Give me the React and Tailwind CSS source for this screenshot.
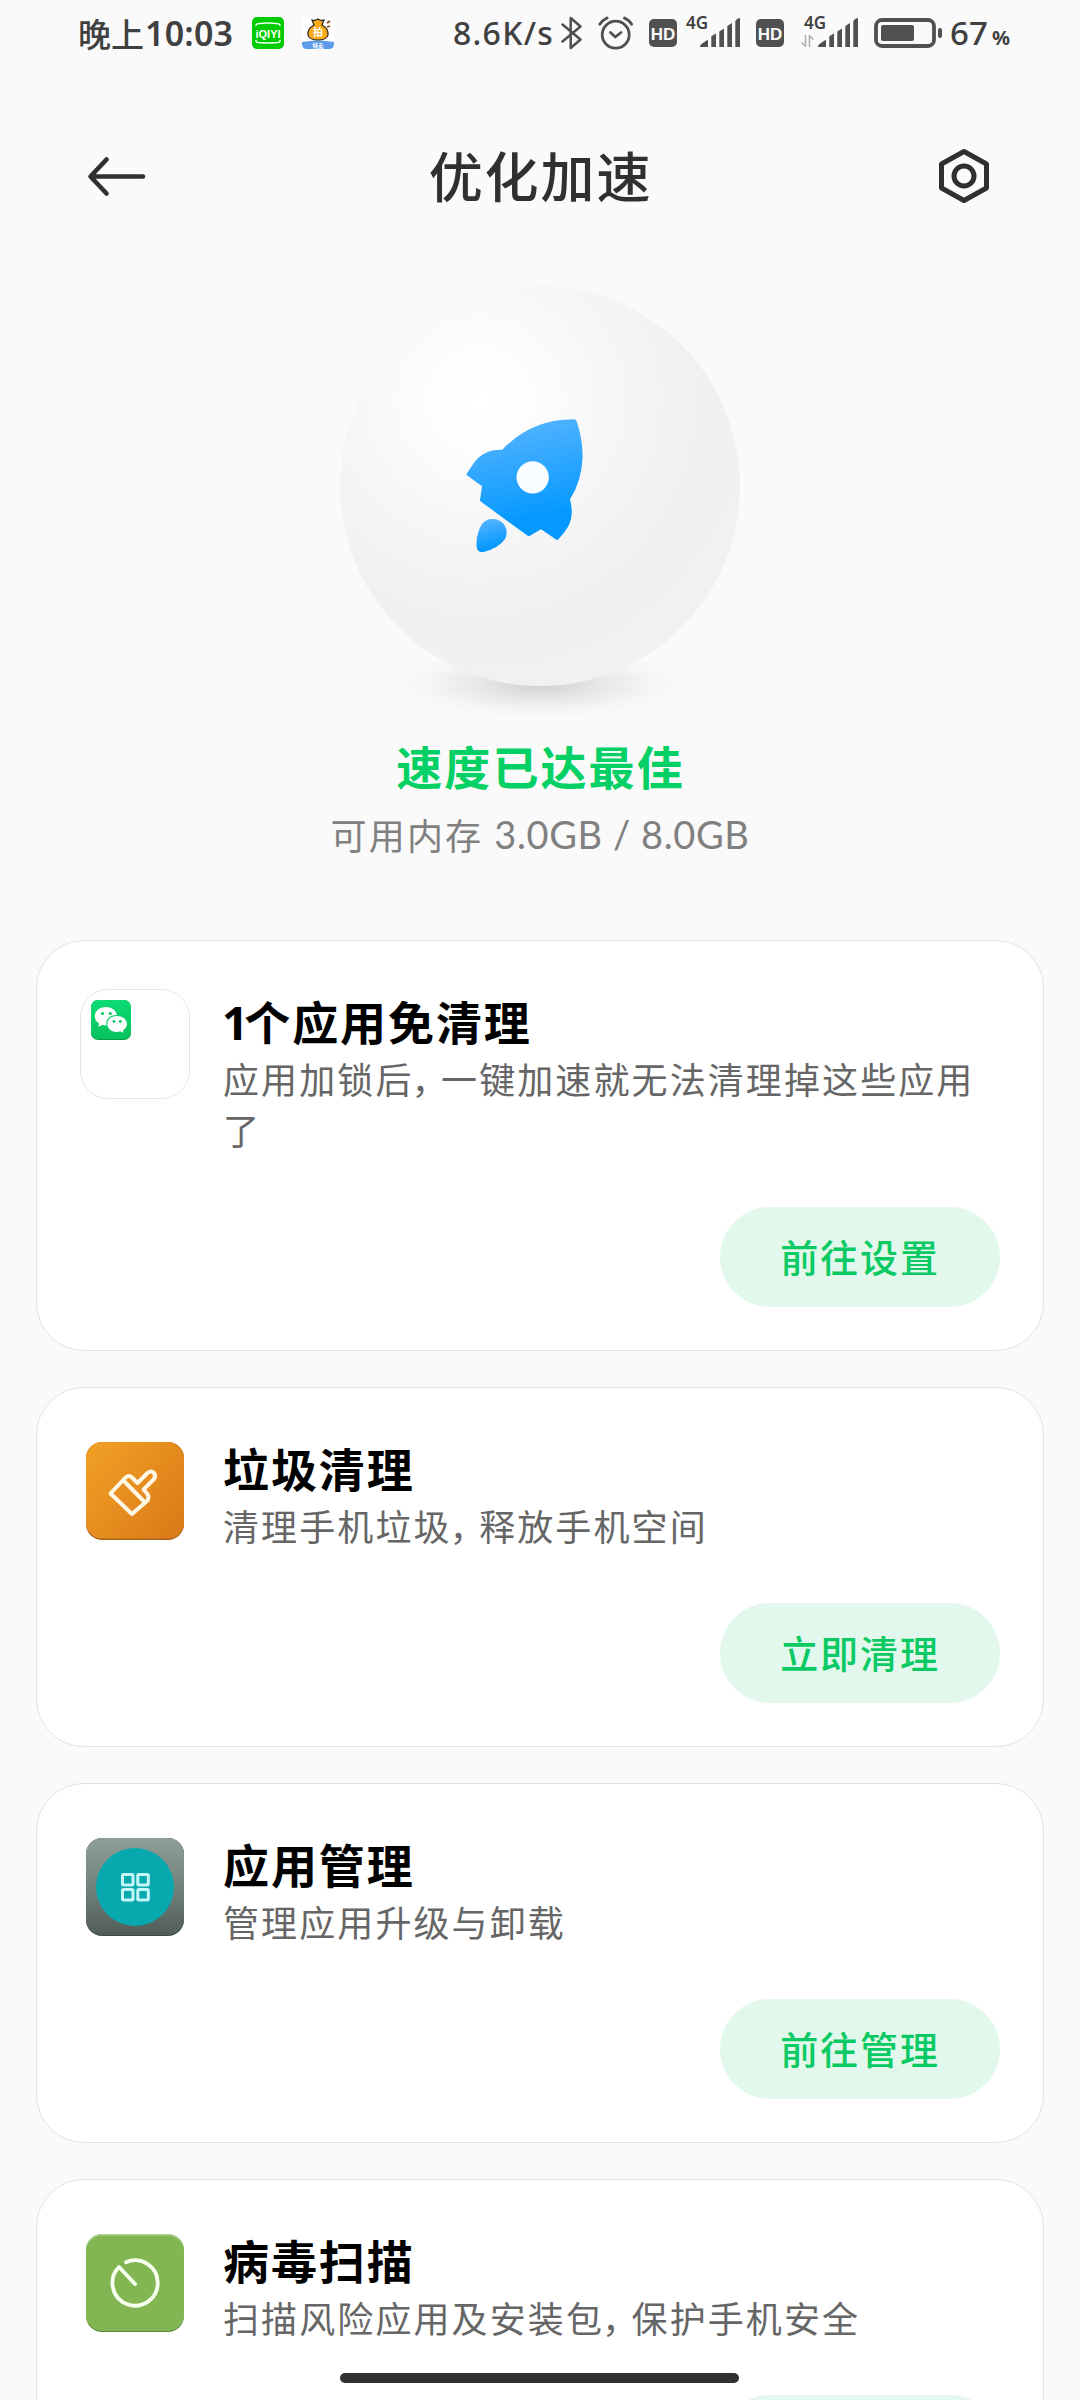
function SignalBars() {
  return (
    <svg width="40" height="29" viewBox="0 0 40 29" fill="#505050">
      <path d="M0 28.5 Q0 27 1.5 26 L7 22.2 Q8 21.8 8 23 V29 H1 Q0 29 0 28.5Z" />
      <path d="M11.3 18.2 L16 15.5 V29 H11.3Z" />
      <path d="M19.3 13.5 L24 10.5 V29 H19.3Z" />
      <path d="M27.3 8 L32 5 V29 H27.3Z" />
      <path d="M35.3 3 Q36 1.5 38 .5 Q40 -.5 40 1 V29 H35.3Z" />
    </svg>
  );
}

function HdBadge({ className }) {
  return (
    <div className={"flex h-7 w-7 items-center justify-center rounded-[5px] bg-[#505050] font-['Liberation_Sans',sans-serif] text-[17px] leading-none font-bold text-[#fafafa] " + className}>
      <span className="pt-[2px]">HD</span>
    </div>
  );
}

function StatusBar() {
  return (
    <div className="flex h-[66px] shrink-0 items-start pl-[78px] text-[#404040]">
      <div className="mt-[13px] flex w-[170px] items-center whitespace-nowrap leading-[40px]">
        <span className="w-[67px] font-['Noto_Sans_CJK_SC',sans-serif] text-[33px] font-medium">晚上</span>
        <span className="font-['Noto_Sans',sans-serif] text-[34px] font-semibold tracking-[0.2px]">10:03</span>
      </div>
      <svg className="mt-[17px] ml-[4px] shrink-0 overflow-visible" width="32" height="32" viewBox="0 0 32 32">
        <rect width="32" height="32" rx="5" fill="#0c0" />
        <path d="M4 9 V8 Q4 7 6 6.700 Q16 5.500 26 6.700 Q28 7 28 8 V9 M4 23 V24 Q4 25.300 6 25.600 Q16 26.600 26 25.600 Q28 25.300 28 24 V23" fill="none" stroke="#eaffea" strokeWidth="1.500" />
        <text x="16" y="20.500" textAnchor="middle" fontFamily="Liberation Sans Narrow, Liberation Sans" fontWeight="700" fontSize="11" fill="#fff">iQIYI</text>
      </svg>
      <svg className="mt-[17px] ml-[18px] shrink-0" width="32" height="32" viewBox="0 0 32 32">
        <rect width="32" height="32" rx="5" fill="#fff" />
        <path d="M0 25 Q16 22 32 25 V27 Q32 32 27 32 H5 Q0 32 0 27Z" fill="#5b9bea" />
        <path d="M10 3 Q13 4 16 2 Q19 4 22 3 L20 8 Q27 12 26 18 Q25 23 16 23 Q7 23 6 18 Q5 12 12 8Z" fill="#f9a91a" stroke="#222" strokeWidth="1.200" />
        <path d="M25 6 L28 4 M25 10 L28 9" stroke="#7a4a10" strokeWidth="1.800" />
        <text x="16" y="19" textAnchor="middle" fontFamily="Noto Sans CJK SC" fontWeight="700" fontSize="10" fill="#fff">拍</text>
        <text x="16" y="30.500" textAnchor="middle" fontFamily="Noto Sans CJK SC" fontWeight="700" fontSize="5.500" fill="#fff">特卖</text>
      </svg>
      <span className="mt-[13px] ml-[119px] w-[102px] whitespace-nowrap font-['Noto_Sans','Noto_Sans_CJK_SC',sans-serif] text-[32px] leading-[40px] font-medium tracking-[1.3px]">8.6K/s</span>
      <svg className="mt-[16px] ml-[6px] shrink-0" width="22" height="34" viewBox="0 0 22 34" fill="none" stroke="#505050" strokeWidth="2.500" strokeLinejoin="round" strokeLinecap="round">
        <path d="M1.500 8.500 L19.500 23.500 L9.700 32 V2 L19.500 10.500 L1.500 25.500" />
      </svg>
      <svg className="mt-[15px] ml-[15px] shrink-0" width="36" height="36" viewBox="0 0 36 36" fill="none" stroke="#505050" strokeWidth="2.800" strokeLinecap="round">
        <circle cx="17.700" cy="19.700" r="13.500" />
        <path d="M12.500 17.500 L17.300 22 L23 17.500 M1.800 9.200 Q4 5.500 9 3 M33.600 9.200 Q31.500 5.500 26.500 3" />
      </svg>
      <HdBadge className="mt-[19px] ml-[15px]" />
      <div className="relative mt-[18px] ml-[23px] h-[29px] w-10">
        <SignalBars />
        <span className="absolute -top-[4px] -left-[14px] font-['Noto_Sans',sans-serif] text-[17px] leading-[18px] font-semibold">4G</span>
      </div>
      <HdBadge className="mt-[19px] ml-[16px]" />
      <div className="relative mt-[18px] ml-[34px] h-[29px] w-10">
        <SignalBars />
        <span className="absolute -top-[4px] -left-[14px] font-['Noto_Sans',sans-serif] text-[17px] leading-[18px] font-semibold">4G</span>
        <svg className="absolute top-[17px] -left-[17px]" width="13" height="12" viewBox="0 0 13 12" fill="none" stroke="#aaa" strokeWidth="1.500">
          <path d="M4.500 0 V11 L0.500 7.500 M8.500 12 V1 L12.500 4.500" />
        </svg>
      </div>
      <svg className="mt-[18px] ml-[16px] shrink-0" width="68" height="30" viewBox="0 0 68 30">
        <rect x="2" y="2" width="58" height="26" rx="6" fill="none" stroke="#505050" strokeWidth="3.800" />
        <rect x="7" y="7" width="33" height="16" rx="2" fill="#505050" />
        <rect x="64" y="10" width="4" height="10" rx="2" fill="#505050" />
      </svg>
      <span className="mt-[13px] ml-[8px] w-[42px] font-['Noto_Sans',sans-serif] text-[33px] leading-[40px] font-medium">67</span>
      <span className="mt-[24px] font-['Noto_Sans',sans-serif] text-[20px] leading-[28px] font-bold">%</span>
    </div>
  );
}

function Header() {
  return (
    <header className="flex h-[220px] shrink-0 items-center justify-between pr-[88px] pl-[86px]">
      <svg width="62" height="44" viewBox="0 0 62 44" fill="none" stroke="#303030" strokeWidth="4.600" strokeLinecap="round" strokeLinejoin="round">
        <path d="M57 22.500 H5 M20.500 5.500 L4.500 22.500 L20.500 39.500" />
      </svg>
      <h1 className="-mt-[3px] pr-[3px] font-['Noto_Sans_CJK_SC',sans-serif] text-[54px] leading-[70px] font-medium tracking-[1.900px] text-[#303030]">优化加速</h1>
      <svg width="56" height="56" viewBox="0 0 56 56" fill="none" stroke="#303030" strokeWidth="5" strokeLinejoin="round">
        <path d="M28 3.500 L50.500 16 V40 L28 52.500 L5.500 40 V16Z" />
        <circle cx="28" cy="28" r="10" />
      </svg>
    </header>
  );
}

function RocketOrb() {
  return (
    <svg className="shrink-0 overflow-visible" width="400" height="400" viewBox="60 78 1200 1200">
      <defs>
        <radialGradient id="orb" gradientUnits="userSpaceOnUse" cx="480" cy="420" r="900">
          <stop offset="0" stopColor="#ffffff" />
          <stop offset="0.12" stopColor="#fefefe" />
          <stop offset="0.45" stopColor="#f6f6f6" />
          <stop offset="0.75" stopColor="#f0f0f0" />
          <stop offset="1" stopColor="#f1f1f1" />
        </radialGradient>
        <radialGradient id="shade">
          <stop offset="0" stopColor="#000" stopOpacity="0.17" />
          <stop offset="0.4" stopColor="#000" stopOpacity="0.08" />
          <stop offset="0.75" stopColor="#000" stopOpacity="0.018" />
          <stop offset="1" stopColor="#000" stopOpacity="0" />
        </radialGradient>
        <linearGradient id="body" x1="0.3" y1="0" x2="0.5" y2="1">
          <stop offset="0.1" stopColor="#4db2ff" />
          <stop offset="0.85" stopColor="#0598ff" />
        </linearGradient>
      </defs>
      <ellipse cx="660" cy="1272" rx="450" ry="108" fill="url(#shade)" />
      <circle cx="660" cy="678" r="600" fill="url(#orb)" />
      <path
        fill="url(#body)"
        d="M547 569 Q635 477 762 478 Q768 479 771 486 Q787 535 788 588 Q786 662 750 718 Q763 765 744 800 Q732 820 715 838 Q712 842 707 838 L663 808 L630 827 Q625 829 621 826 L483 725 Q480 723 480 720 L486 679 L441 646 Q438 644 441 640 L463 607 Q492 567 547 569Z"
      />
      <path fill="url(#body)" d="M480 803 Q491 777 516 777 Q540 777 553 794 Q566 817 555 837 Q535 865 491 876 Q472 879 470 862 Q467 831 480 803Z" />
      <circle cx="638" cy="652" r="48.500" fill="#fafdff" />
    </svg>
  );
}

function WeChatFolder() {
  return (
    <div className="h-[110px] w-[110px] rounded-[28px] border border-[#e6e6e6] pt-[10px] pl-[10px]">
      <svg width="40" height="40" viewBox="0 0 40 40">
        <defs>
          <linearGradient id="wx" x1="0" y1="0" x2="0" y2="1">
            <stop offset="0" stopColor="#0bdc74" />
            <stop offset="1" stopColor="#06c25d" />
          </linearGradient>
        </defs>
        <rect width="40" height="40" rx="7" fill="#0a9a4b" />
        <rect width="40" height="39" rx="7" fill="url(#wx)" />
        <path fill="#fff" d="M15 7 C8.500 7 3.800 11 3.800 16.200 C3.800 19.200 5.300 21.800 8 23.500 L7.500 27 L11.500 24.800 Q13.500 25.500 15.600 25.300 C14 19.500 19 14.700 26 15 C25 10 20.500 7 15 7Z" />
        <path fill="#fff" d="M26 16 C20.500 16 16.300 19.600 16.300 24 C16.300 28.500 20.500 32 26 32 Q28 32 29.500 31.300 L32.300 32.800 L32 30.200 C34.500 28.600 36 26.500 36 24 C36 19.600 31.500 16 26 16Z" />
        <g fill="#07c962">
          <circle cx="11.500" cy="13.500" r="1.600" />
          <circle cx="19.300" cy="13.500" r="1.600" />
          <circle cx="23" cy="21.500" r="1.400" />
          <circle cx="29.300" cy="21.500" r="1.400" />
        </g>
      </svg>
    </div>
  );
}

function BrushIcon() {
  return (
    <svg className="mt-[6px] ml-[6px]" width="98" height="98" viewBox="0 0 98 98">
      <defs>
        <linearGradient id="orange" x1="0" y1="0" x2="1" y2="0.8">
          <stop offset="0" stopColor="#f1a126" />
          <stop offset="1" stopColor="#dc7c18" />
        </linearGradient>
      </defs>
      <rect width="98" height="98" rx="16" fill="#a9641c" />
      <rect width="98" height="96.500" rx="16" fill="url(#orange)" />
      <g fill="none" stroke="#fff6e4" strokeWidth="4" strokeLinejoin="round">
        <path d="M24.500 51.500 L39.500 35.500 Q43 32.500 46 35.500 L51.500 41 L61.500 31 Q65 28 68 31 Q70.500 34.500 67.500 37.500 L57.500 47.500 L61 51.500 Q64 55.500 61 59 L46 72Z" />
        <path d="M37 38 L59 60.500" />
      </g>
    </svg>
  );
}

function GridIcon() {
  return (
    <svg className="mt-[6px] ml-[6px]" width="98" height="98" viewBox="0 0 98 98">
      <defs>
        <linearGradient id="grey" x1="0" y1="0" x2="0" y2="1">
          <stop offset="0" stopColor="#8f9e99" />
          <stop offset="0.5" stopColor="#74827d" />
          <stop offset="1" stopColor="#505d59" />
        </linearGradient>
      </defs>
      <rect width="98" height="98" rx="16" fill="#3f4946" />
      <rect width="98" height="97" rx="16" fill="url(#grey)" />
      <circle cx="49" cy="49" r="39" fill="#08a9ae" />
      <g fill="none" stroke="#c4f6f8" strokeWidth="3">
        <rect x="36.500" y="36.500" width="10.500" height="10.500" rx="1" />
        <rect x="51.800" y="36.500" width="10.500" height="10.500" rx="1" />
        <rect x="36.500" y="51.500" width="10.500" height="10.500" rx="1" />
        <rect x="51.800" y="51.500" width="10.500" height="10.500" rx="1" />
      </g>
    </svg>
  );
}

function ScanIcon() {
  return (
    <svg className="mt-[6px] ml-[6px]" width="98" height="98" viewBox="0 0 98 98">
      <rect width="98" height="98" rx="16" fill="#5c8a38" />
      <rect width="98" height="96.500" rx="16" fill="#b4d494" />
      <rect y="1.500" width="98" height="95" rx="16" fill="#82b653" />
      <path d="M40 28.200 A22.650 22.650 0 1 1 33 33 L49 50" fill="none" stroke="#f8ffef" strokeWidth="3.800" strokeLinecap="round" strokeLinejoin="round" />
    </svg>
  );
}

function Card({ icon, title, desc, action }) {
  return (
    <section className="flex shrink-0 flex-col rounded-[48px] border border-[#e2e2e2] bg-white px-[43px] pt-[48px] pb-[43px]">
      <div className="flex">
        <div className="w-[110px] shrink-0">{icon}</div>
        <div className="ml-[33px] flex flex-col">
          <h2 className="h-[64px] font-['Noto_Sans_CJK_SC',sans-serif] text-[46px] leading-[63px] font-bold tracking-[1.900px] text-black">{title}</h2>
          <div className="font-['Noto_Sans_CJK_SC',sans-serif] text-[36px] leading-[51px] tracking-[2.100px] whitespace-nowrap text-[#666]">{desc}</div>
        </div>
      </div>
      <button className="mt-[52px] h-[100px] w-[280px] self-end rounded-full bg-[#e2f8ec] pb-[3px] font-['Noto_Sans_CJK_SC',sans-serif] text-[38px] leading-[56px] font-medium tracking-[1.900px] text-[#0bca64]">
        {action}
      </button>
    </section>
  );
}

function Comma() {
  return <span className="relative -left-[2px] tracking-[-8.5px]">，</span>;
}

export default function App() {
  return (
    <div className="relative flex h-[2400px] w-[1080px] flex-col overflow-hidden bg-[#fafafa]">
      <StatusBar />
      <Header />
      <div className="flex h-[654px] shrink-0 flex-col items-center">
        <RocketOrb />
        <div className="mt-[49px] pl-[1px] font-['Noto_Sans_CJK_SC',sans-serif] text-[46px] leading-[60px] font-bold tracking-[2.100px] text-[#05d065]">速度已达最佳</div>
        <div className="mt-[14px] flex items-center leading-[50px] whitespace-nowrap text-[#808080]">
          <span className="font-['Noto_Sans_CJK_SC',sans-serif] text-[36px] tracking-[2.200px]">可用内存</span>
          <span className="ml-[11px] font-['Lato','Noto_Sans',sans-serif] text-[38px] tracking-[0.6px]">3.0GB / 8.0GB</span>
        </div>
      </div>
      <main className="flex flex-col gap-[36px] px-[36px]">
        <Card
          icon={<WeChatFolder />}
          title={<><span className="-ml-[1px] font-['Open_Sans',sans-serif] leading-none tracking-[-4px]">1</span>个应用免清理</>}
          desc={<>应用加锁后<Comma />一键加速就无法清理掉这些应用<br />了</>}
          action="前往设置"
        />
        <Card icon={<BrushIcon />} title="垃圾清理" desc={<>清理手机垃圾<Comma />释放手机空间</>} action="立即清理" />
        <Card icon={<GridIcon />} title="应用管理" desc="管理应用升级与卸载" action="前往管理" />
        <Card icon={<ScanIcon />} title="病毒扫描" desc={<>扫描风险应用及安装包<Comma />保护手机安全</>} />
      </main>
      <div className="absolute top-[2373px] left-[340px] h-[10px] w-[399px] rounded-full bg-[#303030]" />
    </div>
  );
}
